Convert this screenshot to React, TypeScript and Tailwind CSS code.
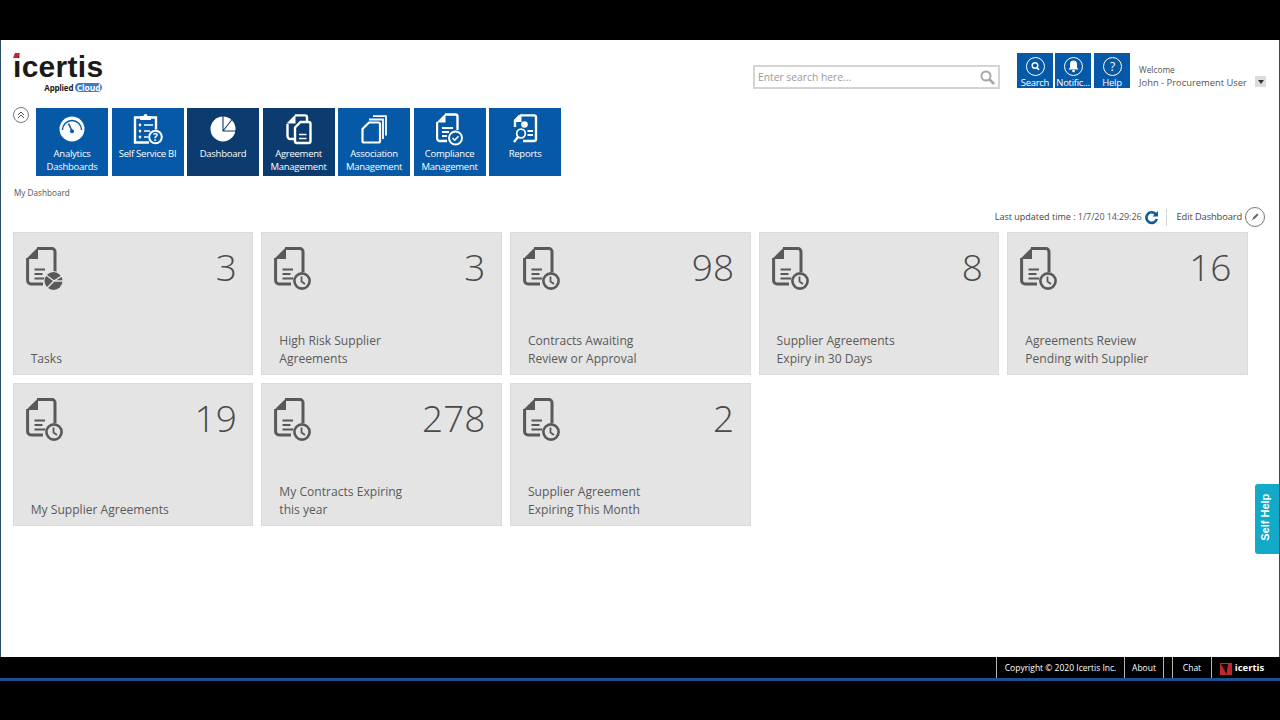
import React from "react";

const FONT = "font-['Open_Sans','Noto_Sans',sans-serif]";

function DocBase() {
  return (
    <>
      <path d="M11 1.600H26a3 3 0 0 1 3 3V25M17 37H5a3.400 3.400 0 0 1-3.400-3.400V11" fill="none" stroke="#595959" strokeWidth="3" />
      <path d="M12 0.200V12H0.200Z" fill="#595959" />
      <path d="M8.500 22.500H19M8.500 27H16.500M8.500 31.500H19" stroke="#595959" strokeWidth="2.200" fill="none" />
    </>
  );
}

function ClockDoc() {
  return (
    <svg width="37" height="43" viewBox="0 0 37 43" className="block">
      <DocBase />
      <circle cx="28" cy="34" r="7.600" fill="#e4e4e4" stroke="#595959" strokeWidth="2.600" />
      <path d="M27.500 29.500V34.500L31 37" fill="none" stroke="#595959" strokeWidth="1.800" />
    </svg>
  );
}

function PieDoc() {
  return (
    <svg width="37" height="43" viewBox="0 0 37 43" className="block">
      <DocBase />
      <circle cx="27.500" cy="34" r="10" fill="#e4e4e4" />
      <circle cx="27.500" cy="34" r="9" fill="#595959" />
      <path d="M28 34L37 28M28 34L37 34M28 34L20 28M28 34L21 41" stroke="#e4e4e4" strokeWidth="1.500" fill="none" />
    </svg>
  );
}

const W = "#ffffff";
function Gauge() {
  return (
    <svg width="26" height="26" viewBox="0 0 26 26">
      <circle cx="13" cy="13" r="12.500" fill={W} />
      <path d="M3.500 14a9.500 9.500 0 0 1 19 0" fill="none" stroke="#0559a6" strokeWidth="1.400" />
      <path d="M9.500 7.500L13 15" stroke="#0559a6" strokeWidth="1.600" />
      <circle cx="13" cy="15.200" r="2" fill="#0559a6" />
    </svg>
  );
}
function Clipboard() {
  return (
    <svg width="30" height="32" viewBox="0 0 30 32" fill="none">
      <path d="M8 4.500H2v25h14" stroke={W} strokeWidth="2.400" />
      <path d="M16 4.500h7v12" stroke={W} strokeWidth="2.400" />
      <path d="M7 7V3h3.500a2 2 0 0 1 4 0H18v4Z" fill={W} />
      <path d="M6 11l2 2M8 11l-2 2M6 17l2 2M8 17l-2 2M6 23l2 2M8 23l-2 2M11 12h9M11 18h6M11 24h4" stroke={W} strokeWidth="1.500" />
      <circle cx="22.500" cy="24" r="6.300" stroke={W} strokeWidth="2" fill="#0559a6" />
      <text x="22.500" y="27.700" textAnchor="middle" fontSize="10" fontWeight="700" fill={W} fontFamily="Open Sans">?</text>
    </svg>
  );
}
function Pie() {
  return (
    <svg width="26" height="26" viewBox="0 0 26 26">
      <circle cx="13" cy="13" r="12.500" fill={W} />
      <path d="M13 0V15H26M13 15L22 3.500" fill="none" stroke="#0b3b6f" strokeWidth="1.100" />
    </svg>
  );
}
function Agreement({ bg }: { bg: string }) {
  return (
    <svg width="26" height="31" viewBox="0 0 26 31" fill="none">
      <path d="M9 1.400H19a2 2 0 0 1 2 2V7M8 25H4.500a3 3 0 0 1-3-3V10" stroke={W} strokeWidth="2.400" />
      <path d="M9.500 0.500V9.500H0.500Z" fill={W} />
      <path d="M9 13.500L14.500 8H22.500a2 2 0 0 1 2 2V27a2 2 0 0 1-2 2H11a2 2 0 0 1-2-2Z" stroke={W} strokeWidth="2.400" fill={bg} />
      <path d="M13 20.500h7.500M13 24.500h7.500" stroke={W} strokeWidth="1.600" />
    </svg>
  );
}
function Association() {
  return (
    <svg width="26" height="29" viewBox="0 0 26 29" fill="none">
      <path d="M8 7.500h9.500a1.500 1.500 0 0 1 1.500 1.500V26a1.500 1.500 0 0 1-1.500 1.500H3A1.500 1.500 0 0 1 1.500 26V14Z" stroke={W} strokeWidth="2.200" />
      <path d="M8 4.500H22V24M12 1.200H25V20.500" stroke={W} strokeWidth="1.800" />
    </svg>
  );
}
function Compliance() {
  return (
    <svg width="27" height="33" viewBox="0 0 27 33" fill="none">
      <path d="M9 1.500H19.500a2 2 0 0 1 2 2V17M11 28H4a3 3 0 0 1-3-3V9" stroke={W} strokeWidth="2.400" />
      <path d="M9.500 0.500V9.500H0.500Z" fill={W} />
      <path d="M6 15h11M6 19h7M6 23h5" stroke={W} strokeWidth="1.800" />
      <circle cx="19.500" cy="25" r="6.500" stroke={W} strokeWidth="2" />
      <path d="M16.500 25l2.200 2.200 3.800-4" stroke={W} strokeWidth="1.600" />
    </svg>
  );
}
function Reports() {
  return (
    <svg width="25" height="31" viewBox="0 0 25 31" fill="none">
      <path d="M7 1.400H21a2 2 0 0 1 2 2V25a2 2 0 0 1-2 2H10M7 1.400L2 6.500V13" stroke={W} strokeWidth="2.400" />
      <path d="M8.500 0.500V8H1Z" fill={W} />
      <circle cx="11.500" cy="10.500" r="3.300" fill={W} />
      <path d="M14.500 17h5.500M14.500 21h5.500" stroke={W} strokeWidth="1.800" />
      <circle cx="8" cy="19.500" r="4.300" stroke={W} strokeWidth="1.800" />
      <path d="M5 23L1 28" stroke={W} strokeWidth="2.400" />
    </svg>
  );
}

function Tile({ icon, lines, dark }: { icon: React.ReactNode; lines: string[]; dark?: boolean }) {
  return (
    <div className={`w-[72px] h-[68px] flex flex-col items-center text-white ${dark ? "bg-[#0b3b6f]" : "bg-[#0559a6]"}`}>
      <div className="h-[39px] flex items-center justify-center pt-[3px]">{icon}</div>
      <div className="text-[9.500px] leading-[13px] text-center whitespace-nowrap tracking-[-0.250px]">
        {lines.map((l) => (
          <div key={l}>{l}</div>
        ))}
      </div>
    </div>
  );
}

function TopBtn({ label, children }: { label: string; children: React.ReactNode }) {
  return (
    <div className="w-[36px] h-[35px] bg-[#0559a6] text-white flex flex-col items-center pt-[3px]">
      <svg width="21" height="21" viewBox="0 0 21 21" fill="none">
        <circle cx="10.500" cy="10.500" r="9" stroke="#fff" strokeWidth="1" />
        {children}
      </svg>
      <div className="text-[9.500px] leading-[11px] whitespace-nowrap tracking-[-0.300px]">{label}</div>
    </div>
  );
}

function Card({ value, lines, pie }: { value: string; lines: string[]; pie?: boolean }) {
  return (
    <div className="w-[240.650px] h-[143px] bg-[#e4e4e4] border border-[#dadada] flex flex-col pl-[12px] pr-[15.500px] pt-[14px] pb-[6px]">
      <div className="flex justify-between items-start">
        {pie ? <PieDoc /> : <ClockDoc />}
        <div className="text-[37px] leading-[41px] -mt-[1px] font-light text-[#4a4a4a]">{value}</div>
      </div>
      <div className="mt-auto pl-[5px] text-[12.100px] leading-[18px] text-[#5a5a5a] whitespace-nowrap">
        {lines.map((l) => (
          <div key={l}>{l}</div>
        ))}
      </div>
    </div>
  );
}

function FootCell({ children, className = "" }: { children?: React.ReactNode; className?: string }) {
  return (
    <div className={`h-full border-l border-[#b5b5b5] flex items-center justify-center pt-[2px] ${className}`}>{children}</div>
  );
}

export default function App() {
  return (
    <div className={`${FONT} w-[1280px] h-[720px] bg-black flex flex-col overflow-hidden relative`}>
      <div className="h-[40px] shrink-0" />
      <div className="h-[617px] shrink-0 bg-white border-x border-[#2c4d66] flex flex-col relative">
        <div className="h-[68px] shrink-0 flex items-start pl-[11px]">
          <div className="w-[92px] pt-[12px] pl-[1px] relative">
            <div className="font-['Liberation_Sans',sans-serif] font-bold text-[30px] leading-[30px] text-[#1a1a1a] tracking-[0.300px] whitespace-nowrap">icertis</div>
            <div className="absolute left-[2px] top-[13px] w-[5px] h-[5px] bg-[#c8202f] -skew-x-[20deg]" />
            <div className="flex justify-end items-center gap-[2px] mt-[1px] pr-[2px]">
              <span className="text-[8px] leading-[9px] font-bold text-[#222222] tracking-[-0.200px]">Applied</span>
              <span className="text-[8.500px] leading-[9px] font-bold text-white bg-[#3d7cc4] rounded-[5px] px-[1.500px] tracking-[-0.100px]">Cloud</span>
            </div>
          </div>
          <div className="ml-[649px] mt-[25px] w-[247px] h-[24px] border-2 border-[#d4d4d4] flex items-center justify-between pl-[3px] pr-[3px] text-[10.300px] text-[#9a9a9a]">
            <span className="pt-[1px]">Enter search here...</span>
            <svg width="15" height="15" viewBox="0 0 15 15" fill="none">
              <circle cx="6" cy="6" r="4.500" stroke="#a8a8a8" strokeWidth="2" />
              <path d="M9.500 9.500L14 14" stroke="#a8a8a8" strokeWidth="2.600" />
            </svg>
          </div>
          <div className="ml-[17px] mt-[13px] flex gap-[2px]">
            <TopBtn label="Search">
              <circle cx="10" cy="9.500" r="2.800" stroke="#fff" strokeWidth="1.400" />
              <path d="M12 11.800L14 13.800" stroke="#fff" strokeWidth="1.800" />
            </TopBtn>
            <TopBtn label="Notific...">
              <path d="M10.500 4.500a3.500 3.500 0 0 1 3.500 3.500v3.500l1.500 2h-10l1.500-2V8a3.500 3.500 0 0 1 3.500-3.500Z" fill="#fff" />
              <circle cx="10.500" cy="15" r="1.300" fill="#fff" />
            </TopBtn>
            <div className="ml-[1px]">
              <TopBtn label="Help">
                <text x="10.500" y="15" textAnchor="middle" fontSize="12" fill="#fff" fontFamily="Open Sans">?</text>
              </TopBtn>
            </div>
          </div>
          <div className="ml-[9px] mt-[24px] w-[112px] text-[#555555]">
            <div className="text-[8.300px] leading-[12px]">Welcome</div>
            <div className="text-[9.400px] leading-[14px] whitespace-nowrap">John - Procurement User</div>
          </div>
          <div className="ml-[4px] mt-[36px] w-[11px] h-[11px] bg-[#dcdcdc] flex items-center justify-center">
            <div className="w-0 h-0 border-x-[3.500px] border-x-transparent border-t-[4px] border-t-[#333333]" />
          </div>
        </div>

        <div className="h-[68px] shrink-0 flex pl-[12.050px]">
          <div className="w-[16px] h-[16px] mt-[-1px] mr-[7px] rounded-full border border-[#777777] flex items-center justify-center">
            <svg width="8" height="8" viewBox="0 0 8 8" fill="none">
              <path d="M1 4L4 1L7 4M1 7L4 4L7 7" stroke="#555555" strokeWidth="1" />
            </svg>
          </div>
          <div className="flex gap-[3.500px]">
            <Tile icon={<Gauge />} lines={["Analytics", "Dashboards"]} />
            <Tile icon={<Clipboard />} lines={["Self Service BI"]} />
            <Tile icon={<Pie />} lines={["Dashboard"]} dark />
            <Tile icon={<Agreement bg="#0b3b6f" />} lines={["Agreement", "Management"]} dark />
            <Tile icon={<Association />} lines={["Association", "Management"]} />
            <Tile icon={<Compliance />} lines={["Compliance", "Management"]} />
            <Tile icon={<Reports />} lines={["Reports"]} />
          </div>
        </div>

        <div className="pl-[13px] pt-[11px] text-[8.200px] leading-[12px] text-[#555555]">My Dashboard</div>

        <div className="flex justify-end items-center h-[24px] mt-[6px] pr-[14px] text-[9px] text-[#444444]">
          <span className="font-medium">Last updated time :&nbsp;</span>
          <span className="tracking-[-0.100px] text-[#555555]">1/7/20 14:29:26</span>
          <svg width="15" height="15" viewBox="0 0 15 15" fill="none" className="ml-[3px] mr-[1px]">
            <path d="M12 4.500A5.300 5.300 0 1 0 12.800 9" stroke="#0d5a9c" strokeWidth="2.600" />
            <path d="M14 1V6.500H8.500Z" fill="#0d5a9c" />
          </svg>
          <div className="w-px h-[17px] bg-[#d5d5d5] ml-[6px] mr-[9px]" />
          <span className="font-medium tracking-[-0.100px] text-[9.300px]">Edit Dashboard</span>
          <div className="w-[20px] h-[20px] ml-[3px] rounded-full border border-[#777777] flex items-center justify-center">
            <svg width="10" height="10" viewBox="0 0 10 10" fill="none">
              <path d="M7 1.500L8.500 3L4 7.500L2.500 6Z" fill="#666666" />
              <path d="M2.300 6.800L1.200 8.800L3.200 7.700Z" fill="#666666" />
            </svg>
          </div>
        </div>

        <div className="mt-[3px] pl-[11.700px] flex flex-wrap gap-x-[8px] gap-y-[8px] w-[1260px]">
          <Card value="3" lines={["Tasks"]} pie />
          <Card value="3" lines={["High Risk Supplier", "Agreements"]} />
          <Card value="98" lines={["Contracts Awaiting", "Review or Approval"]} />
          <Card value="8" lines={["Supplier Agreements", "Expiry in 30 Days"]} />
          <Card value="16" lines={["Agreements Review", "Pending with Supplier"]} />
          <Card value="19" lines={["My Supplier Agreements"]} />
          <Card value="278" lines={["My Contracts Expiring", "this year"]} />
          <Card value="2" lines={["Supplier Agreement", "Expiring This Month"]} />
        </div>

        <div className="absolute right-0 top-[444px] w-[24px] h-[70px] bg-[#13a9c9] rounded-l-[3px] flex items-center justify-center pr-[3px] pb-[3px]">
          <span className="font-['Liberation_Sans',sans-serif] -rotate-90 whitespace-nowrap text-white font-bold text-[11px]">Self Help</span>
        </div>
      </div>

      <div className="h-[21px] shrink-0 bg-black flex justify-end text-white text-[8.500px] pr-[2px]">
        <FootCell className="w-[128px]">Copyright © 2020 Icertis Inc.</FootCell>
        <FootCell className="w-[39px]">About</FootCell>
        <FootCell className="w-[9px]" />
        <FootCell className="w-[39px]">Chat</FootCell>
        <FootCell className="w-[67px] gap-[3px] pr-[6px]">
          <svg width="12" height="12" viewBox="0 0 12 12">
            <rect width="12" height="12" fill="#c0282f" />
            <path d="M1 1H8L6.500 11Z" fill="#1a0000" />
          </svg>
          <span className="font-bold text-[9.500px]">icertis</span>
        </FootCell>
      </div>
      <div className="h-[3px] shrink-0 bg-[#1f4f93]" />
    </div>
  );
}
